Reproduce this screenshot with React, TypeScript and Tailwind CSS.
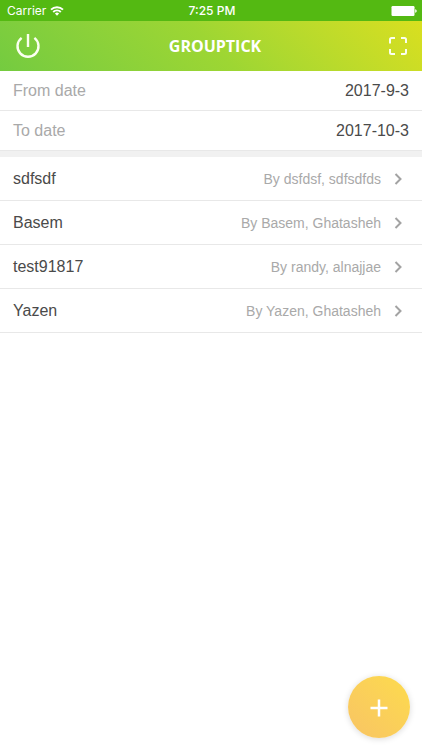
import { FC, useState } from "react";

interface Group {
  name: string;
  owner: string;
}

const groups: Group[] = [
  { name: "sdfsdf", owner: "dsfdsf, sdfsdfds" },
  { name: "Basem", owner: "Basem, Ghatasheh" },
  { name: "test91817", owner: "randy, alnajjae" },
  { name: "Yazen", owner: "Yazen, Ghatasheh" },
];

const StatusBar: FC = () => (
  <div className="grid grid-cols-3 items-center h-[21px] pl-[7px] pr-[5px] bg-[#54b912] text-white text-[12px] leading-4 font-[Inter,sans-serif]">
    <div className="flex items-center gap-1">
      <span>Carrier</span>
      <svg width="14" height="10" viewBox="0 0 14 10" fill="none" stroke="white" strokeWidth="1.9">
        <path d="M1 3.7a8.4 8.4 0 0 1 12 0" />
        <path d="M3.2 6a5.3 5.3 0 0 1 7.6 0" />
        <path d="M7 9.8 4.9 7.6a3 3 0 0 1 4.2 0z" fill="white" stroke="none" />
      </svg>
    </div>
    <span className="text-center font-medium">7:25 PM</span>
    <svg className="justify-self-end" width="26" height="10" viewBox="0 0 26 10" fill="white">
      <rect x="0.5" y="0" width="23" height="10" rx="1.2" />
      <path d="M24.2 3.2c1.2.3 1.5 1 1.5 1.8s-.3 1.5-1.5 1.8z" />
    </svg>
  </div>
);

const Header: FC = () => (
  <header className="flex items-center justify-between h-[50px] px-[14px] bg-linear-45 from-[#74cb40] via-[#9dd633] to-[#d9df1f] text-white">
    <button type="button" aria-label="Log out" className="flex w-8 pl-px">
      <svg width="26" height="26" viewBox="0 0 26 26" fill="none" stroke="#fbfff0" strokeWidth="2.4">
        <path d="M13 1v13" />
        <path d="M6.6 4.9a10.5 10.5 0 1 0 12.8 0" />
      </svg>
    </button>
    <h1 className="font-['Open_Sans',sans-serif] text-base font-bold">GROUPTICK</h1>
    <button type="button" aria-label="Scan" className="flex w-6 justify-end">
      <svg width="20" height="20" viewBox="0 0 20 20" fill="none" stroke="#fbfff0" strokeWidth="2">
        <path d="M2 7.500V3.500A1.500 1.500 0 0 1 3.500 2H7M13 2h3.500A1.500 1.500 0 0 1 18 3.500V7M18 13v3.500a1.500 1.500 0 0 1-1.500 1.500H13M7 18H3.500A1.500 1.500 0 0 1 2 16.500V13" />
      </svg>
    </button>
  </header>
);

interface DateFieldProps {
  id: string;
  label: string;
  initial: string;
}

const DateField: FC<DateFieldProps> = ({ id, label, initial }) => {
  const [value, setValue] = useState(initial);

  return (
    <div className="flex items-center h-10 px-[13px] border-b border-[#e8e8e8]">
      <label htmlFor={id} className="text-[#a9a9a9] shrink-0">
        {label}
      </label>
      <input
        id={id}
        type="text"
        value={value}
        onChange={(e) => setValue(e.target.value)}
        className="flex-1 min-w-0 text-right bg-transparent outline-none"
      />
    </div>
  );
};

const GroupRow: FC<Group> = ({ name, owner }) => (
  <li className="border-b border-[#e8e8e8]">
    <a href="#" className="flex items-center h-[43px] pl-[13px] pr-[19px]">
      <span className="flex-1">{name}</span>
      <span className="text-sm text-[#a9a9a9]">By {owner}</span>
      <svg className="ml-[13px]" width="9" height="12" viewBox="0 0 9 12" fill="none" stroke="#a3a3a3" strokeWidth="2">
        <path d="M1.5 1l5 5-5 5" />
      </svg>
    </a>
  </li>
);

const App: FC = () => {
  return (
    <div className="min-h-screen bg-white text-base text-[#4a4a4a] font-['Liberation_Sans',Arial,sans-serif]">
      <StatusBar />
      <Header />
      <main>
        <form className="border-b-6 border-[#f1f1f1]">
          <DateField id="from" label="From date" initial="2017-9-3" />
          <DateField id="to" label="To date" initial="2017-10-3" />
        </form>
        <ul>
          {groups.map((group) => (
            <GroupRow key={group.name} {...group} />
          ))}
        </ul>
      </main>
      <button
        type="button"
        aria-label="Add group"
        className="fixed right-3 bottom-3 flex items-center justify-center size-[62px] rounded-full bg-linear-to-tr from-[#f8c464] to-[#fddb4c] shadow-[0_1px_6px_rgba(0,0,0,0.15)]"
      >
        <svg className="mt-0.5" width="18" height="18" viewBox="0 0 18 18" fill="none" stroke="white" strokeWidth="2.5">
          <path d="M9 .5v17M.5 9h17" />
        </svg>
      </button>
    </div>
  );
};

export default App;
